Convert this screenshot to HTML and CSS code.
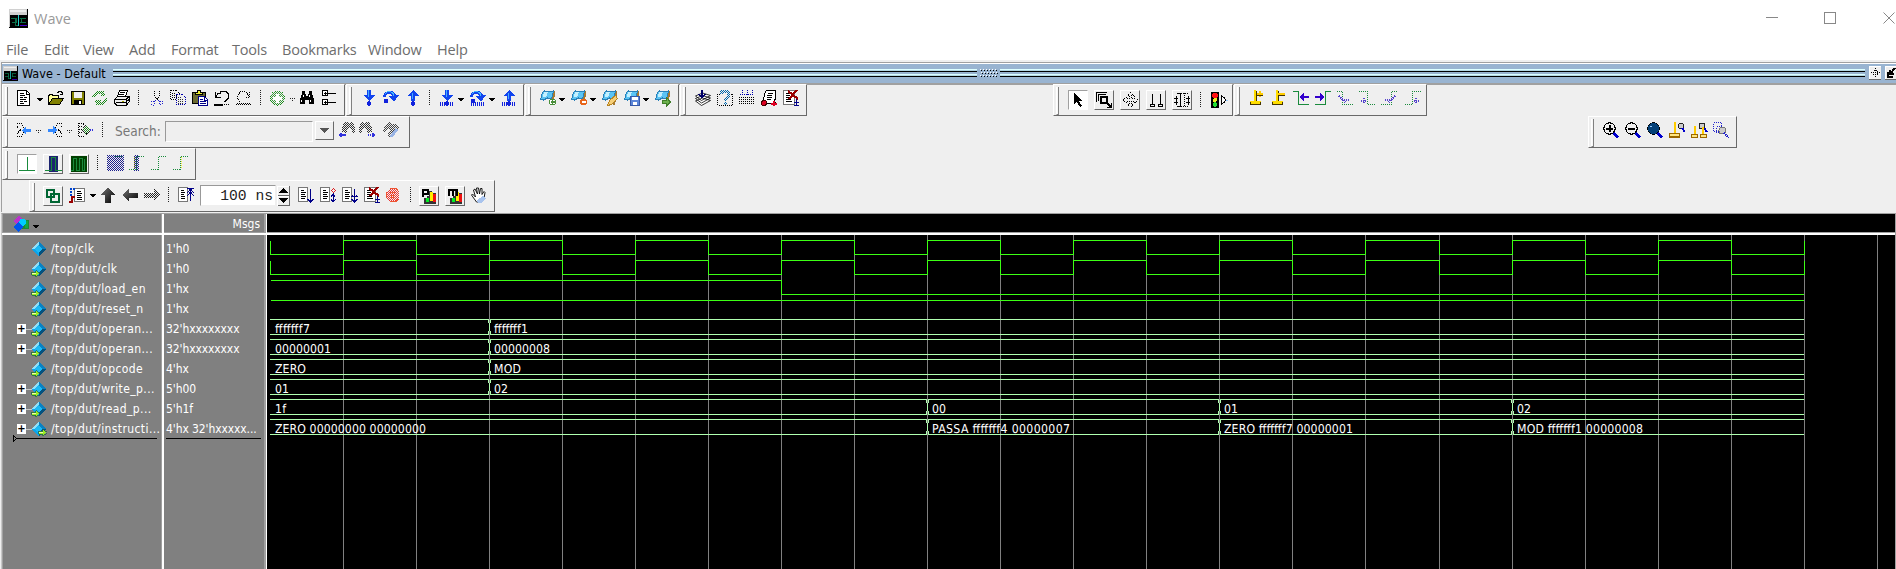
FILE: index.html
```html
<!DOCTYPE html>
<html lang="en">
<head>
<meta charset="utf-8">
<title>Wave</title>
<link rel="stylesheet" href="styles.css">
</head>
<body>
<svg class="defs" aria-hidden="true">
<defs>
<pattern id="ck" width="2" height="2" patternUnits="userSpaceOnUse"><path fill="#fff" d="M0 0h1v1h-1zM1 1h1v1h-1z"/></pattern>
<mask id="dim" maskUnits="userSpaceOnUse" x="0" y="0" width="18" height="18"><rect width="18" height="18" fill="url(#ck)"/></mask>
<symbol id="app" viewBox="0 0 19 19"><path fill="#000" d="M0 0h19v19H0z"/><path fill="#d0d0d0" d="M0 0h18v6H0zM0 0h1v18H0z"/><path fill="#eee" d="M1 1h16v2H1z"/><path stroke="#0a7048" d="M2 9.500h5v4h-4M6.500 10v6h3M11 9.500h6M11 13.500h6M12.500 9v5"/><path stroke="#2cc" d="M9.500 6v11"/><path stroke="#40c" d="M11 16.500h7"/></symbol>
<symbol id="doc" viewBox="0 0 16 16"><path fill="#fff" stroke="#000" d="M1.500 .500h9l3 3v12h-12z"/><path stroke="#000" d="M10.500 1v3h3M4 3.500h4M4 5.500h5M4 7.500h3M8 7.500h3M4 9.500h6M4 11.500h3M8 11.500h3M4 13.500h4"/></symbol>
<symbol id="open" viewBox="0 0 16 16"><path fill="#ff9" stroke="#000" d="M.5 14.500v-9h1v-1h3v1h6v3h-6z"/><path fill="#808000" stroke="#000" d="M.5 14.500l4-6h11l-4 6z"/><path stroke="#000" d="M9 2.500h1v-1h3v1h1v1M12 4.500h3M14.500 2v3"/></symbol>
<symbol id="save" viewBox="0 0 16 16"><path fill="#808000" stroke="#000" d="M1.500 1.500h13v13h-13z"/><path fill="#efefef" d="M4 2h8v6H4z"/><path fill="#000" d="M4 10h8v5H4z"/><path fill="#fff" d="M9 11h2v3H9z"/></symbol>
<symbol id="refresh" viewBox="0 0 16 16"><g mask="url(#dim)"><path fill="#198a19" d="M0 7L4 1l6 0 2-1 1 6-6 0 2-2-3 0-3 4zM16 8l-4 7-6 0-2 1-1-6 6 0-2 2 3 0 3-4z"/></g></symbol>
<symbol id="print" viewBox="0 0 16 16"><path fill="#fff" stroke="#000" d="M3.500 6.500l2-6h8l-2 6z"/><path stroke="#000" d="M6 2.500h5M5 4.500h5"/><path fill="#eee" stroke="#000" d="M.5 9.500l3-3h12v5l-3 3.500H2.500l-2-2z"/><path stroke="#000" d="M1 9.500h11l3-3M12.500 10v5M2 12.500h10M13 10.500h1v-1h1"/><path fill="#aa0" d="M8 11h2v1H8z"/></symbol>
<symbol id="cut" viewBox="0 0 16 16"><path stroke="#000" stroke-dasharray="1 1" d="M6.500 1v5l3 4M11.500 1v5l-3 4"/><path stroke="#22c" stroke-dasharray="1 1" d="M8 10l-2 1h-2l-1 2 1 2h2l1-4M10 10l2 1h2v3h-3v-3"/></symbol>
<symbol id="copy" viewBox="0 0 16 16"><path fill="#efefef" stroke="#000" stroke-dasharray="1 1" d="M.5.500h6l3 3v6h-9zM2 3.500h4M2 5.500h5M2 7.500h5"/><path fill="#efefef" stroke="#00a" stroke-dasharray="1 1" d="M6.500 4.500h6l3 3v7h-9z"/><path stroke="#333" stroke-dasharray="1 1" d="M8 7.500h4M8 9.500h6M8 11.500h6M8 13h6"/></symbol>
<symbol id="paste" viewBox="0 0 16 16"><path fill="#6a6a30" stroke="#000" d="M.5 2.500h13v11H.5z"/><path fill="#ee3" stroke="#000" d="M3.500 4.500v-2h2v-2h3v2h2v2z"/><path fill="#fff" stroke="#008" d="M6.500 6.500h6l3 3v6h-9z"/><path stroke="#008" d="M12.500 7v3h3M8 9.500h3M8 11.500h6M8 13.500h6"/></symbol>
<symbol id="undo" viewBox="0 0 16 16"><path stroke="#000" d="M1.500 2v5h5M2 6.500l2-3.500h2v-1.500h6l2 2v5l-3 3h-1"/><path fill="#000" d="M0 14h9v2H0zM10 14h1v1h-1zM12 14h1v1h-1zM14 14h1v1h-1z"/></symbol>
<symbol id="redo" viewBox="0 0 16 16"><path stroke="#000" stroke-dasharray="1 1" d="M13.500 2v5H9M13 6l-3-4.500H5L1.500 5v4l3 3"/><g mask="url(#dim)"><path fill="#000" d="M0 13h15v2H0z"/></g></symbol>
<symbol id="add" viewBox="0 0 16 16"><g mask="url(#dim)"><circle cx="7.500" cy="8" r="7" fill="#3a9a3a" stroke="#198a19"/></g><path fill="#fff" d="M6 4h3v3h3v3H9v3H6v-3H3V7h3z"/></symbol>
<symbol id="find" viewBox="0 0 16 16"><path fill="#000" d="M3 1h3v3h1v2h2V4h1V1h3v3l2 5v5h-5v-4H6v4H1V9l2-5z"/><path fill="#fff" d="M4 5h1v2H4zM2 10h1v2H2zM10 5h1v2h-1zM11 10h1v2h-1z"/></symbol>
<symbol id="tree" viewBox="0 0 16 16"><path fill="#fff" stroke="#000" d="M1.500.500h5v5h-5zM1.500 9.500h5v5h-5z"/><path stroke="#000" d="M3 3.500h3M4.500 2v3M3 12.500h3M4.500 11v3M7 3.500h8M7 12.500h8"/></symbol>
<symbol id="dn" viewBox="0 0 16 16"><path fill="#14e" d="M6 0h4v5h4L8 11 2 5h4z"/><path fill="#4af" d="M7 0h1v7H7z"/><circle cx="8" cy="13.500" r="2.200" fill="#12d"/></symbol>
<symbol id="ov" viewBox="0 0 16 16"><path fill="#14e" d="M0 7C1-1 11-1 13 5h3l-5 7-5-6h3C7 2 3 3 3 7z"/><path fill="none" stroke="#4bf" d="M2 4c3-4 8-3 9 2"/><circle cx="3" cy="11" r="2.300" fill="#12d"/></symbol>
<symbol id="up" viewBox="0 0 16 16"><path fill="#14e" d="M8 0l6 6h-4v5H6V6H2z"/><path fill="#4af" d="M7 3h1v6H7z"/><circle cx="8" cy="13.500" r="2.200" fill="#12d"/></symbol>
<symbol id="bits" viewBox="0 0 16 16"><path stroke="#12d" stroke-width="4" stroke-dasharray="1 1" d="M1 14h5M11 14h4"/></symbol>
<symbol id="bm" viewBox="0 0 16 16"><path fill="#a67a30" d="M12 1h3v3l-2 11h-2z"/><path fill="#5bc4f4" stroke="#2a80b8" d="M.5 9.500l2-7 2-1.500 5 1 4-1-2 8-4-1-4 2z"/><path fill="#c4f0ff" d="M4 2h4l-2 5H3z"/></symbol>
<symbol id="stack" viewBox="0 0 16 16"><path fill="#fff" stroke="#000" stroke-width=".8" shape-rendering="auto" d="M.5 11l7-3 8 2.500-9 5zM.5 8.500l7-3 8 2.500-9 5zM.5 6l7-3 8 2.500-9 5z"/><path stroke="#006" stroke-width="2" d="M7 0v7"/><path stroke="#006" d="M3.500 4l3.500 3.500L10.500 4"/></symbol>
<symbol id="ask" viewBox="0 0 16 16"><path stroke="#000" stroke-dasharray="1 1" d="M0 4.500h4M12 4.500h4M.5 4v11h15v-11"/><g mask="url(#dim)"><path stroke="#06a" stroke-width="3" d="M4 4c0-4 8-4 8 0s-4 3-4 7M8 12v3"/></g></symbol>
<symbol id="grid" viewBox="0 0 16 16"><path stroke="#000" stroke-dasharray="1 1" d="M0 7.500h16M0 9.500h16M0 11.500h16M0 13.500h16"/><path stroke="#00a" stroke-dasharray="1 1" d="M3.500 0v6M8.500 0v6M13.500 0v6M1 4.500h14"/></symbol>
<symbol id="prof" viewBox="0 0 16 16"><path fill="#fff" stroke="#000" d="M2.500 11.500l1-8 2-3h9v8l-1 2 1 3H6l-1-2z"/><path stroke="#000" d="M7 3.500h5M6 5.500h5M6 7.500h5M6 9.500h4"/><circle cx="3" cy="13" r="2.500" fill="#d02" stroke="#400"/><path fill="#d02" d="M12 11h2v5h-2zM10 13h6v2h-6z"/></symbol>
<symbol id="docx" viewBox="0 0 16 16"><path fill="#fff" stroke="#777" d="M.5.500h11v14H.5z"/><path stroke="#000" d="M3 3.500h5M3 5.500h4M3 7.500h6M3 9.500h5M3 11.500h6"/><path stroke="#900" stroke-width="2.200" d="M5 1l10 8M14 0L6 9"/><path stroke="#008" d="M13.500 9v6M11 12.500h5M11 15.500h5"/></symbol>
<symbol id="docd" viewBox="0 0 16 16"><path fill="#fff" stroke="#777" d="M.5.500h9v14H.5z"/><path stroke="#000" d="M3 3.500h3M3 5.500h5M3 7.500h4M3 9.500h5M3 11.500h4"/><path stroke="#008" d="M12.500 2v12M9.500 12l3 3 3-3"/></symbol>
<symbol id="docr" viewBox="0 0 16 16"><path fill="#fff" stroke="#777" d="M.5.500h9v14H.5z"/><path stroke="#000" d="M3 3.500h3M3 5.500h5M3 7.500h4M3 9.500h5M3 11.500h4"/><path stroke="#d22" d="M13.500 1.500l2 2-2 2-2-2z"/><path stroke="#008" d="M13.500 6v9M11 9.500l2-2 2 2M11 12l2 3 3-3"/></symbol>
<symbol id="docu" viewBox="0 0 18 16"><path fill="#fff" stroke="#777" d="M1.500.500h9v14h-9z"/><path stroke="#000" d="M4 3.500h3M4 5.500h4M4 7.500h3M4 9.500h4M4 11.500h4"/><path stroke="#008" d="M10 1.500h7M13.500 2v12M10 6l3.500-4 3.500 4M10 9l3.500-4 3.500 4"/></symbol>
<symbol id="stop" viewBox="0 0 16 16"><g mask="url(#dim)"><path fill="#e33" d="M4 1h6l3 3v8l-3 3H4l-4-4V5z"/></g><path stroke="#e53" d="M4 1.500h6l2 2M4 14.500h6l2-2M.5 5v6M4 5.500h5M4 8h5M4 10.500h5"/></symbol>
<symbol id="ptr" viewBox="0 0 16 16"><path fill="#000" d="M4 1l8 8H9l3 5-2 1-3-5-3 2z"/></symbol>
<symbol id="zsel" viewBox="0 0 16 16"><path stroke="#000" d="M2.500 8.500v-6h7M.5 10V.500h10"/><path stroke="#000" stroke-width="2" d="M5 5h6v6H5zM11 11l5 5M16 11v5h-5"/></symbol>
<symbol id="pan" viewBox="0 0 16 16"><path stroke="#000" stroke-dasharray="1 1" d="M8.500.500l3 3h-2v3h3v-2l3 3.500-3 3.500v-2h-3v3h2l-3 3-3-3h2v-3h-3v2l-3-3.500 3-3.500v2h3v-3h-2z"/></symbol>
<symbol id="two" viewBox="0 0 16 16"><path stroke="#000" d="M4.500 2v10M12.500 2v10M2.500 12.500h4v2h-4zM10.500 12.500h4v2h-4z"/></symbol>
<symbol id="bar" viewBox="0 0 16 16"><path stroke="#000" d="M0 6.500h4M0 10.500h4M2.500 4v5M2.500 9v4M3 1.500h3.500v13H3M12 6.500h4M12 10.500h4M14.500 4v9"/><path stroke="#000" stroke-dasharray="1 1" d="M10.500 1v14M7 1.500h7M7 14.500h7"/></symbol>
<symbol id="light" viewBox="0 0 18 16"><path fill="#000" d="M1 0h8v16H1z"/><circle cx="5" cy="3.500" r="3" fill="#f11"/><circle cx="5" cy="8" r="2" fill="#ee2"/><circle cx="5" cy="12.500" r="2.300" fill="#2d3"/><path fill="#fff" stroke="#000" d="M11.500 4v8l3-2 1-2-1-2z"/><path stroke="#9cf" d="M16 8.500h2"/></symbol>
<symbol id="curp" viewBox="0 0 16 16"><path fill="#fd0" stroke="#430" d="M1.500 11.500h10v3h-10z"/><path fill="#fd0" d="M1 11h11v1H1zM5 0h2v11H5z"/><path stroke="#430" d="M7.500 1v10"/></symbol>
<symbol id="edl" viewBox="0 0 16 16"><path stroke="#198a3c" d="M0 1.500h5.500v13h10.500"/><path fill="#30c" d="M6 7l5-4v3h5v2h-5v3z"/></symbol>
<symbol id="edr" viewBox="0 0 16 16"><path stroke="#198a3c" d="M0 14.500h10.500v-13h6"/><path fill="#30c" d="M10 7L5 3v3H0v2h5v3z"/></symbol>
<symbol id="e1" viewBox="0 0 16 16"><path stroke="#198a3c" stroke-dasharray="1 1" d="M0 1.500h5.500v13H16"/><path stroke="#54c" stroke-width="2" stroke-dasharray="1 1" d="M2 6l7 7M5 10h7"/></symbol>
<symbol id="e2" viewBox="0 0 16 16"><path stroke="#198a3c" stroke-dasharray="1 1" d="M0 1.500h8.500v13H16"/><path stroke="#54c" stroke-width="2" stroke-dasharray="1 1" d="M5 8v6M2 11h6"/></symbol>
<symbol id="zi" viewBox="0 0 16 16"><path stroke="#00c" stroke-width="3" d="M10 10l5 5.500"/><circle cx="6.500" cy="6.500" r="5.700" fill="#efefef" stroke="#000" stroke-width="1.200"/></symbol>
<symbol id="cur" viewBox="0 0 16 16"><path stroke="#fc0" stroke-width="2" d="M6 0v11"/><path fill="#ffe680" stroke="#960" stroke-width="1.400" d="M.7 11.500h10v3.500h-10z"/><circle cx="12" cy="4" r="2.800" fill="#ccc" stroke="#222"/><path stroke="#00c" stroke-width="2" d="M13 6l3 4"/></symbol>
<symbol id="min1" viewBox="0 0 16 16"><path stroke="#000" stroke-dasharray="1 1" d="M1 1.500h4l3 5M1 14.500h4l3-5M1 4.500l4 3-4 4"/><path fill="#38f" d="M6 8l4-4v3h5v3h-5v3z"/></symbol>
<symbol id="bino" viewBox="0 0 16 16"><g mask="url(#dim)"><path fill="#333" d="M3 10V5l3-5h3l1 2 2-2 2 1 2 5v5h-3V7l-2-1-2 1-2 4z"/></g><path stroke="#33d" stroke-width="2" stroke-dasharray="1.500 .500" d="M0 13h7M2 11v4"/></symbol>
<symbol id="w1" viewBox="0 0 16 16"><path stroke="#198a3c" d="M0 14.500h16M8.500 1v13"/></symbol>
<symbol id="st" viewBox="0 0 16 16"><path stroke="#198a3c" stroke-dasharray="1 1" d="M0 14.500h7M7.500 15v-13M8 1.500h7"/></symbol>
<symbol id="link" viewBox="0 0 16 16"><path stroke="#063" stroke-width="2" d="M2 2h7v7H2zM6 6h8v8H6z"/></symbol>
<symbol id="sgnl" viewBox="0 0 16 16"><path fill="#fff" stroke="#777" d="M5.500 1.500h10v13h-10z"/><path stroke="#000" d="M8 4.500h4M8 6.500h5M8 8.500h4M8 10.500h5M8 12.500h5"/><path stroke="#04c" stroke-width="2" stroke-dasharray="2 1" d="M2 9V2h4"/><path stroke="#900" stroke-width="2" d="M0 15h3v-5h3"/></symbol>
<linearGradient id="bk" x2="1" y2="1"><stop stop-color="#777"/><stop offset="1" stop-color="#000"/></linearGradient>
<symbol id="au" viewBox="0 0 16 16"><path fill="url(#bk)" d="M8 0l7 8h-4v8H5V8H1z"/></symbol>
<symbol id="al" viewBox="0 0 16 16"><path fill="url(#bk)" d="M0 8l7-6v4h9v5H7v4z"/></symbol>
<symbol id="ar" viewBox="0 0 16 16"><g mask="url(#dim)"><path fill="#222" d="M16 8L10 2v4H0v5h10v4z"/></g></symbol>
<symbol id="bars" viewBox="0 0 16 16"><path fill="#333" d="M3 10h3V8h2V3h3v2h4v11H3z"/><path fill="#0e2" d="M5 10h3v4H5z"/><path fill="#fe0" d="M9 4h3v9H9z"/><path fill="#e11" d="M12 6h3v8h-3z"/></symbol>
<symbol id="hand" viewBox="0 0 16 16"><path fill="#fff" stroke="#000" stroke-width=".9" shape-rendering="auto" d="M5.500 15l-5-7 1-1 3 3-2-7 1.500-1 2.500 5-1-6h2l1 6 1-5.500h1.500v6l2-3 1 1-1 6-3 3.500z"/><path fill="#a9c4ee" d="M6 13l6-4 3 2-5 5H7z"/></symbol>
<symbol id="sig" viewBox="0 0 16 16"><path fill="#0ba4ea" d="M8 0l8 8-8 8-8-8z"/><path fill="#8fe0fa" d="M8 0v4L4 8H0z"/><path fill="#0a82c2" d="M8 0l8 8h-4L8 4z"/><path fill="#06527e" d="M16 8l-8 8v-4l4-4z"/><path fill="#1bb9f5" d="M8 4l4 4-4 4-4-4z"/></symbol>
<symbol id="io" viewBox="0 0 9 7"><path fill="#9e2" stroke="#264" stroke-width=".8" d="M.5 2h4V0.500l4 3-4 3V5h-4z"/><path fill="#efa" d="M1 2.500h4v1H1z"/></symbol>
<symbol id="objs" viewBox="0 0 16 16"><path fill="#b3c" d="M0 5l6-5 4 4-5 5z"/><path fill="#283" d="M8 4h8v9H8z"/><path fill="#1a4" d="M12 5h3v7h-3z"/><path fill="#0cf" d="M7 3h4l2 2v3l-3 2-4-3z"/><path fill="#05e" d="M5 6l5 5-5 5-5-5z"/></symbol>
</defs>
</svg>

<header class="titlebar">
  <svg class="appicon"><use href="#app"/></svg><span class="wintitle">Wave</span>
  <svg class="winctl" viewBox="0 0 130 13"><path stroke="#888" d="M0 5.500h12M58.500.500h11v11h-11z"/><path stroke="#888" shape-rendering="auto" d="M117.500.500l11 11M128.500.500l-11 11"/></svg>
</header>
<nav class="menu"><span style="width:38px">File</span><span style="width:39px">Edit</span><span style="width:46px">View</span><span style="width:42px">Add</span><span style="width:61px">Format</span><span style="width:50px">Tools</span><span style="width:86px">Bookmarks</span><span style="width:69px">Window</span><span>Help</span></nav>

<div class="dock">
  <svg class="dockicon"><use href="#app"/></svg><span class="docktitle">Wave - Default</span>
  <i class="rails r1"></i>
  <svg class="dots" viewBox="0 0 20 9"><path stroke="#fff" stroke-dasharray="1 2" d="M1 .500h18M2 3.500h17M1 6.500h18"/><path stroke="#000" stroke-dasharray="1 2" d="M2 1.500h18M3 4.500h16M2 7.500h18"/></svg>
  <i class="rails r2"></i>
  <svg class="dbtn" viewBox="0 0 12 13"><path stroke="#000" stroke-dasharray="1 1" d="M6.500 2v9M2 6.500h9M4.500 4.500h4v4h-4z"/></svg>
  <svg class="dbtn" viewBox="0 0 12 13"><path stroke="#000" stroke-width="2" d="M3 6v5h5M10 2L5 8M5 4v4h4"/></svg>
</div>

<div class="toolbars">
  <div class="trow">
    <div class="group g1"><i class="grip"></i>
      <svg class="ic"><use href="#doc"/></svg><i class="dd wide"></i><svg class="ic"><use href="#open"/></svg><svg class="ic"><use href="#save"/></svg><svg class="ic"><use href="#refresh"/></svg><svg class="ic"><use href="#print"/></svg><i class="sep"></i><svg class="ic"><use href="#cut"/></svg><svg class="ic"><use href="#copy"/></svg><svg class="ic"><use href="#paste"/></svg><svg class="ic"><use href="#undo"/></svg><svg class="ic"><use href="#redo"/></svg><i class="sep"></i><svg class="ic"><use href="#add"/></svg><i class="dd off"></i><svg class="ic"><use href="#find"/></svg><svg class="ic"><use href="#tree"/></svg></div>
    <div class="group g2"><i class="grip"></i>
      <svg class="ic"><use href="#dn"/></svg><svg class="ic"><use href="#ov"/></svg><svg class="ic"><use href="#up"/></svg><i class="sep"></i><svg class="ic"><use href="#dn"/><use href="#bits"/></svg><i class="dd"></i><svg class="ic"><use href="#ov"/><path stroke="#12d" stroke-width="4" stroke-dasharray="1 1" d="M1 14h14"/></svg><i class="dd"></i><svg class="ic"><use href="#up"/><use href="#bits"/></svg></div>
    <div class="group g3"><i class="grip"></i>
      <svg class="ic"><use href="#bm"/><circle cx="12.500" cy="12" r="3" fill="#fff" stroke="#4a8f3a"/><path stroke="#4a8f3a" stroke-width="1.500" d="M10.500 12h4M12.500 10v4"/></svg><i class="dd"></i><svg class="ic"><use href="#bm"/><circle cx="12.500" cy="12" r="3.500" fill="#e8651a"/><path stroke="#fff" stroke-width="1.500" d="M10.500 12h4"/></svg><i class="dd"></i><svg class="ic"><use href="#bm"/><path fill="#f6cf77" stroke="#b88422" d="M5.500 15.500l2-5 6-5 2 3-6 6z"/></svg><svg class="ic"><use href="#bm"/><path fill="#5c86d8" stroke="#3558a8" d="M6.500 6.500h9v9h-9z"/><path fill="#fff" d="M8 7h6v3H8zM9 12h4v3H9z"/></svg><i class="dd"></i><svg class="ic"><use href="#bm"/><path fill="#6cb04c" stroke="#3f7d2a" d="M7.500 10.500h4v-3l4 4.500-4 4v-3h-4z"/></svg></div>
    <div class="group g4"><i class="grip"></i>
      <svg class="ic"><use href="#stack"/></svg><svg class="ic"><use href="#ask"/></svg><svg class="ic"><use href="#grid"/></svg><svg class="ic"><use href="#prof"/></svg><svg class="ic"><use href="#docx"/></svg></div>
    <div class="group g5"><i class="grip"></i>
      <span class="btn on"><svg class="ic"><use href="#ptr"/></svg></span><span class="btn"><svg class="ic"><use href="#zsel"/></svg></span><span class="btn"><svg class="ic"><use href="#pan"/></svg></span><span class="btn"><svg class="ic"><use href="#two"/></svg></span><span class="btn"><svg class="ic"><use href="#bar"/></svg></span><i class="sep"></i><svg class="ic w18"><use href="#light"/></svg></div>
    <div class="group g6"><i class="grip"></i>
      <svg class="ic"><use href="#curp"/><path stroke="#fc0" stroke-width="2" d="M8 4h6M11 1v6"/><path stroke="#430" d="M8 5.500h6"/></svg><svg class="ic"><use href="#curp"/><path stroke="#fc0" stroke-width="2" d="M7 4h7"/><path stroke="#430" d="M8 5.500h6"/></svg><svg class="ic"><use href="#edl"/></svg><svg class="ic"><use href="#edr"/></svg><svg class="ic"><use href="#e1"/></svg><svg class="ic"><use href="#e2"/></svg><svg class="ic"><use href="#e1" transform="translate(16 0) scale(-1 1)"/></svg><svg class="ic"><use href="#e2" transform="translate(18 0) scale(-1 1)"/></svg></div>
  </div>
  <div class="trow">
    <div class="group g7"><i class="grip"></i>
      <svg class="ic"><use href="#min1"/></svg><i class="dd off wide"></i><svg class="ic"><use href="#min1" transform="translate(16 0) scale(-1 1)"/></svg><i class="dd off wide"></i><svg class="ic"><path stroke="#000" stroke-dasharray="1 1" d="M1 1.500h4l4 3M1 14.500h4l4-3M1 4.500h4M1 7.500h4M1 10.500h4M.5 1v14"/><g mask="url(#dim)"><path fill="#282" stroke="#222" d="M8 3l5 5-5 5-4-5z"/></g><path stroke="#33d" stroke-dasharray="1 1" stroke-width="2" d="M12 8h4"/></svg><i class="sep"></i>
      <span class="search">Search:</span><span class="entry"></span><svg class="combo" viewBox="0 0 19 19"><path fill="#555" d="M4 7h11l-5 5h-1z"/></svg><svg class="ic"><use href="#bino"/></svg><svg class="ic flip"><use href="#bino"/></svg><svg class="ic last"><g mask="url(#dim)"><path fill="#444" d="M0 8l3-6 4-2 3 2 3-1 3 4-8 10-4-1 3-5-2-2-3 4z"/></g><path stroke="#9ab4e4" stroke-width="3" d="M8 15l6-8"/></svg></div>
    <div class="group g8"><i class="grip"></i>
      <svg class="ic"><use href="#zi"/><path stroke="#000" stroke-width="2" d="M3 6.500h7M6.500 3v7"/></svg><svg class="ic"><use href="#zi"/><path stroke="#000" stroke-width="2" d="M3 6.500h7"/></svg><svg class="ic"><use href="#zi"/><circle cx="6.500" cy="6.500" r="5.500" fill="#034078"/><path stroke="#9cf" d="M3 4.500h2"/></svg><svg class="ic"><use href="#cur"/></svg><svg class="ic"><circle cx="11" cy="4" r="3" fill="#ccc" stroke="#222"/><path stroke="#00c" stroke-width="2" d="M13 6l3 4"/><path stroke="#fc0" stroke-width="2" d="M4 4v9M12 5v8"/><path fill="#ffe680" stroke="#960" d="M9.500 12.500h6v3h-6zM.5 12.500h6v3h-6z"/></svg><svg class="ic"><path stroke="#22c" stroke-dasharray="1 1" d="M.5.500h8v9h-8zM3.500 4.500h5v6h-5z"/><circle cx="9.500" cy="8.500" r="3.500" fill="#ccc" stroke="#777"/><path stroke="#22c" stroke-width="2" stroke-dasharray="1 1" d="M11 11l5 5"/></svg></div>
  </div>
  <div class="trow">
    <div class="group g9"><i class="grip"></i>
      <span class="btn on"><svg class="ic"><use href="#w1"/></svg></span><span class="btn"><svg class="ic"><path fill="#1c2370" d="M4 0h9v16H4z"/><path stroke="#198a3c" d="M0 14.500h6.500v-13h4v13h6"/></svg></span><span class="btn"><svg class="ic"><path fill="#004000" d="M0 0h16v16H0z"/><path stroke="#198a3c" d="M0 14.500h2.500v-12h3v12h3v-12h3v12h2v-12"/></svg></span><i class="sep"></i><svg class="ic"><g mask="url(#dim)"><path fill="#1c1f8c" d="M0 0h17v16H0z"/></g><path stroke="#198a3c" stroke-dasharray="1 1" d="M8 1.500h8"/></svg><svg class="ic"><g mask="url(#dim)"><path fill="#1c1f8c" d="M5 0h5v16H5z"/></g><path stroke="#cc2" stroke-dasharray="1 1" d="M5.500 2v12"/><use href="#st"/></svg><svg class="ic"><use href="#st"/></svg><svg class="ic"><use href="#st"/><path stroke="#ee3" stroke-dasharray="1 1" d="M8.500 2v12"/></svg></div>
  </div>
  <div class="trow">
    <div class="group g10"><i class="grip"></i>
      <span class="btn"><svg class="ic"><use href="#link"/></svg></span><svg class="ic"><use href="#sgnl"/></svg><i class="dd wide"></i><svg class="ic"><use href="#au"/></svg><svg class="ic"><use href="#al"/></svg><svg class="ic"><use href="#ar"/></svg><i class="sep"></i><svg class="ic w18"><use href="#docu"/></svg><span class="time">100 ns</span><svg class="spin" viewBox="0 0 13 20"><path fill="#efefef" d="M0 0h13v20H0z"/><path fill="#000" d="M6 2h1l4 5H2zM2 12h9l-4 5H6z"/><path stroke="#666" d="M12.500 0v20M0 9.500h13M0 19.500h13"/><path stroke="#fff" d="M.5 0v20M0 .500h12M0 10.500h12"/></svg><svg class="ic"><use href="#docd"/></svg><svg class="ic"><use href="#docr"/></svg><svg class="ic"><use href="#docd"/><path stroke="#008" d="M9 9.500h7M10.500 8l2 3 2-3"/></svg><svg class="ic"><use href="#docx"/></svg><svg class="ic"><use href="#stop"/></svg><i class="sep"></i><span class="btn"><svg class="ic"><use href="#bars"/><path stroke="#000" stroke-width="2" d="M2 9V2h5v4H2"/></svg></span><span class="btn"><svg class="ic"><use href="#bars"/><path stroke="#000" stroke-width="2" d="M2 8V2h8v6M6 2v6"/></svg></span><svg class="ic"><use href="#hand"/></svg></div>
  </div>
</div>

<main class="wave">
  <section class="names">
    <div class="head"><svg class="objs"><use href="#objs"/></svg><i class="dd"></i></div>
    <ul>
      <li><svg class="sg"><use href="#sig"/></svg>/top/clk</li>
      <li><svg class="sg"><use href="#sig"/><use href="#io" x="0" y="9" width="9" height="7"/></svg>/top/dut/clk</li>
      <li><svg class="sg"><use href="#sig"/><use href="#io" x="0" y="9" width="9" height="7"/></svg>/top/dut/load_en</li>
      <li><svg class="sg"><use href="#sig"/><use href="#io" x="0" y="9" width="9" height="7"/></svg>/top/dut/reset_n</li>
      <li class="ex"><svg class="sg"><use href="#sig"/><use href="#io" x="0" y="9" width="9" height="7"/></svg>/top/dut/operan...</li>
      <li class="ex"><svg class="sg"><use href="#sig"/><use href="#io" x="0" y="9" width="9" height="7"/></svg>/top/dut/operan...</li>
      <li><svg class="sg"><use href="#sig"/><use href="#io" x="0" y="9" width="9" height="7"/></svg>/top/dut/opcode</li>
      <li class="ex"><svg class="sg"><use href="#sig"/><use href="#io" x="0" y="9" width="9" height="7"/></svg>/top/dut/write_p...</li>
      <li class="ex"><svg class="sg"><use href="#sig"/><use href="#io" x="0" y="9" width="9" height="7"/></svg>/top/dut/read_p...</li>
      <li class="ex"><svg class="sg"><use href="#sig"/><use href="#io" x="7" y="8" width="9" height="7"/></svg>/top/dut/instructi...</li>
    </ul>
    <svg class="insert" viewBox="0 0 145 8"><path stroke="#000" d="M.5.500v6l3-3zM3 3.500h141"/></svg>
  </section>
  <section class="values">
    <div class="head">Msgs</div>
    <ul><li>1'h0</li><li>1'h0</li><li>1'hx</li><li>1'hx</li><li>32'hxxxxxxxx</li><li>32'hxxxxxxxx</li><li>4'hx</li><li>5'h00</li><li>5'h1f</li><li>4'hx 32'hxxxxx...</li></ul>
    <div class="endline"></div>
  </section>
  <section class="plot">
    <div class="head"></div>
    <!-- canvas coordinates are window coordinates: x from 267, y from 235 -->
    <svg class="traces" viewBox="267 235 1628 334">
      <path stroke="#808080" d="M343.500 235v334M416.500 235v334M489.500 235v334M562.500 235v334M635.500 235v334M708.500 235v334M781.500 235v334M854.500 235v334M927.500 235v334M1000.500 235v334M1073.500 235v334M1146.500 235v334M1219.500 235v334M1292.500 235v334M1365.500 235v334M1439.500 235v334M1512.500 235v334M1585.500 235v334M1658.500 235v334M1731.500 235v334M1804.500 235v334M1877.500 235v334"/>
      <g id="clk" stroke="#3cff14"><path d="M270.500 241v13.500H343.500V240.500H416.500V254.500H489.500V240.500H562.500V254.500H635.500V240.500H708.500V254.500H781.500V240.500H854.500V254.500H927.500V240.500H1000.500V254.500H1073.500V240.500H1146.500V254.500H1219.500V240.500H1292.500V254.500H1365.500V240.500H1439.500V254.500H1512.500V240.500H1585.500V254.500H1658.500V240.500H1731.500V254.500H1804.500V241"/></g>
      <use href="#clk" y="20"/>
      <path stroke="#3cff14" d="M271 280.500H781.500V294.500H1804M271 300.500H1804"/>
      <path stroke="#b0ffb0" d="M270 319.500H1804M270 334.500H1804M270 339.500H1804M270 354.500H1804M270 359.500H1804M270 374.500H1804M270 379.500H1804M270 394.500H1804M270 399.500H1804M270 414.500H1804M270 419.500H1804M270 434.500H1804"/>
      <defs><g id="x"><path stroke="#808080" d="M.5 0v16"/><path stroke="#b0ffb0" d="M-.5 0v4M1.500 0v4M.5 4v8M-.5 12v4M1.500 12v4"/></g></defs>
      <use href="#x" x="489" y="319"/><use href="#x" x="489" y="339"/><use href="#x" x="489" y="359"/><use href="#x" x="489" y="379"/>
      <use href="#x" x="927" y="399"/><use href="#x" x="927" y="419"/><use href="#x" x="1219" y="399"/><use href="#x" x="1219" y="419"/><use href="#x" x="1512" y="399"/><use href="#x" x="1512" y="419"/>
      <g fill="#fff">
        <text x="275" y="333" textLength="35">fffffff7</text><text x="494" y="333" textLength="34">fffffff1</text>
        <text x="275" y="353" textLength="56">00000001</text><text x="494" y="353" textLength="56">00000008</text>
        <text x="275" y="373" textLength="31">ZERO</text><text x="494" y="373" textLength="27">MOD</text>
        <text x="275" y="393" textLength="14">01</text><text x="494" y="393" textLength="14">02</text>
        <text x="275" y="413" textLength="11">1f</text><text x="932" y="413" textLength="14">00</text><text x="1224" y="413" textLength="14">01</text><text x="1517" y="413" textLength="14">02</text>
        <text x="275" y="433" textLength="151">ZERO 00000000 00000000</text><text x="932" y="433" textLength="138">PASSA fffffff4 00000007</text><text x="1224" y="433" textLength="129">ZERO fffffff7 00000001</text><text x="1517" y="433" textLength="126">MOD fffffff1 00000008</text>
      </g>
    </svg>
  </section>
</main>
</body>
</html>
```

FILE: styles.css
```css
* { box-sizing: border-box; }
body {
  margin: 0; width: 1896px; height: 569px; overflow: hidden; background: #efefef;
  font-family: "DejaVu Sans Condensed", "DejaVu Sans", sans-serif; font-stretch: condensed; font-size: 12px;
}
svg { display: block; flex: none; fill: none; shape-rendering: crispEdges; overflow: visible; }
i { display: block; flex: none; }
.defs { position: absolute; width: 0; height: 0; }

.titlebar { height: 38px; background: #fff; display: flex; align-items: flex-start; padding: 9px 0 0 9px; }
.appicon { width: 19px; height: 19px; }
.wintitle { margin: 0 0 0 6px; font: 14.500px/20px "Open Sans", sans-serif; color: #999; }
.winctl { width: 130px; height: 13px; margin: 3px 0 0 auto; }
.menu { height: 22px; background: #fff; display: flex; padding-left: 6px; font: 14.500px/23px "Open Sans", sans-serif; letter-spacing: -.2px; color: #6d6d6d; white-space: nowrap; }
.menu span { flex: none; }

.dock { height: 23px; margin: 2px 0 0 1px; border-top: 1px solid #a0a0a0; border-left: 1px solid #a0a0a0; box-shadow: inset 0 1px #fff; border-bottom: 2px solid #a0a0a0; background: #99b4d1; background-clip: padding-box; display: flex; }
.dockicon { width: 15px; height: 15px; margin: 3px 0 0 1px; }
.docktitle { flex: none; width: 91px; margin-left: 4px; font-size: 12.500px; line-height: 21px; letter-spacing: .05px; white-space: nowrap; color: #000; }
.rails { height: 8px; margin-top: 6px; background: linear-gradient(#dff 0 1px, #b4d8e4 1px 2px, #000 2px 3px, transparent 3px 5px, #dff 5px 6px, #b4d8e4 6px 7px, #000 7px 8px); }
.r1 { width: 864px; }
.dots { width: 20px; height: 9px; margin: 6px 1px 0 2px; }
.r2 { width: 865px; }
.dbtn { width: 12px; height: 13px; margin: 3px 0 0 4px; background: #efefef; box-shadow: inset 1px 1px #fff, 0 1px #696969; }

.toolbars { border-left: 1px solid #a0a0a0; margin-left: 1px; height: 129px; margin-top: -2px; padding-top: 1px; }
.trow { display: flex; height: 32px; }
.group { flex: none; height: 32px; margin-right: 1px; display: flex; align-items: flex-start; padding: 5px 0 0 2px; border: 1px solid; border-color: #fff #696969 #696969 #fff; }
.grip { width: 3px; height: 28px; margin: -3px 9px 0 0; border-left: 1px solid #fff; border-right: 1px solid #808080; border-bottom: 1px solid #808080; background: #f8f8f8; }
.g1 { width: 343px; } .g2 { width: 178px; } .g3 { width: 154px; } .g4 { width: 127px; }
.g1 .grip { margin-right: 8px; }
.g5 { width: 180px; margin-left: 245px; }
.g6 { width: 193px; }
.g7 { width: 408px; } .g7 .grip { margin-right: 8px; }
.g8 { width: 149px; margin-left: 1177px; } .g8 .grip { margin-right: 9px; }
.g9 { width: 194px; }
.g10 { width: 466px; margin-left: 27px; } .g10 .grip { margin-right: 8px; }

.ic { width: 16px; height: 16px; margin-right: 6px; }
.w18 { width: 18px; }
.dd { width: 15px; height: 16px; margin-left: -6px; background: linear-gradient(#000, #000) no-repeat 3px 8px / 6px 1px, linear-gradient(#000, #000) no-repeat 4px 9px / 4px 1px, linear-gradient(#000, #000) no-repeat 5px 10px / 2px 1px; }
.dd.wide { width: 16px; background-position: 5px 8px, 6px 9px, 7px 10px; }
.dd.off { width: 13px; background: repeating-linear-gradient(90deg, #222 0 1px, transparent 1px 2px) no-repeat 4px 8px / 5px 1px, linear-gradient(#222, #222) no-repeat 6px 10px / 1px 1px; }
.dd.off.wide { width: 15px; }
.sep { width: 12px; height: 16px; background: repeating-linear-gradient(#222 0 1px, transparent 1px 2px) no-repeat 2px 0 / 1px 16px; }
.btn { flex: none; width: 20px; height: 20px; margin-right: 6px; padding: 1px; background: #efefef; border: 1px solid; border-color: #fff #696969 #696969 #fff; }
.btn .ic { margin: 0; }
.btn.on { background: #fff; border-color: #a0a0a0 #fff #fff #a0a0a0; }
.g5 .w18, .g5 .sep { margin-top: 2px; }
.g9 > .ic, .g9 > .sep, .g10 > .ic, .g10 > .sep { margin-top: 1px; }
.g10 .dd.wide { width: 15px; }
.g10 .sep { width: 11px; }

.search { flex: none; width: 50px; margin-left: 3px; font-size: 13.500px; line-height: 18px; color: #777; }
.entry { flex: none; width: 148px; height: 21px; margin: -1px 2px 0 0; border: 1px solid; border-color: #999 #fff #fff #999; }
.combo { width: 19px; height: 19px; margin: -1px 5px 0 0; border: 1px solid; border-color: #fff #696969 #696969 #fff; }
.flip { margin-left: -2px; transform: scaleX(-1); margin-right: 8px; }
.time { flex: none; width: 76px; height: 21px; margin: -1px 1px 0 -1px; padding-right: 2px; background: #fff; border: 1px solid; border-color: #999 #efefef #efefef #999; text-align: right; font: 14.670px/20px "Liberation Mono", monospace; color: #222; }
.spin { width: 13px; height: 20px; margin-right: 8px; }

.wave { display: flex; height: 356px; margin-left: 1px; margin-top: 1px; border-top: 1px solid #a0a0a0; border-left: 1px solid #c8c8c8; color: #fff; }
.wave ul { list-style: none; margin: 0; padding: 5px 0 0; }
.wave li { height: 20px; line-height: 19px; white-space: nowrap; display: flex; }
.head { height: 21px; border-bottom: 2px solid #fff; box-shadow: inset 0 -1px #a0a0a0; line-height: 20px; }
.names { width: 162px; background: #808080; border-right: 2px solid #fff; box-shadow: inset -1px 0 #a0a0a0, inset 1px 0 #a0a0a0; }
.names .head { display: flex; padding: 2px 0 0 11px; }
.names .dd { margin: 1px 0 0 1px; }
.objs { width: 16px; height: 16px; }
.names li { padding-left: 29px; letter-spacing: .4px; }
.sg { width: 15px; height: 16px; margin: 1px 5px 0 0; }
.ex::before { content: "+"; flex: none; width: 9px; height: 10px; margin: 4px 5px 0 -14px; background: #fff; color: #000; font: bold 10px/9px "DejaVu Sans", sans-serif; letter-spacing: 0; text-align: center; }
.names .ex { background: linear-gradient(#c8c8c8, #c8c8c8) no-repeat 24px 9px / 6px 1px; }
.insert { width: 145px; height: 8px; margin: -5px 0 0 11px; }
.values { width: 103px; background: #808080; border-right: 1px solid #fff; box-shadow: inset -2px 0 #a0a0a0; }
.values .head { text-align: right; padding-right: 6px; }
.values li { padding-left: 2px; letter-spacing: -.1px; }
.endline { margin: -2px 5px 0 2px; height: 1px; background: #000; }
.plot { width: 1629px; background: #000; border-right: 1px solid #a0a0a0; }
.traces { width: 1628px; height: 334px; overflow: hidden; }
.traces text { font-size: 12.200px; text-rendering: geometricPrecision; }
```
